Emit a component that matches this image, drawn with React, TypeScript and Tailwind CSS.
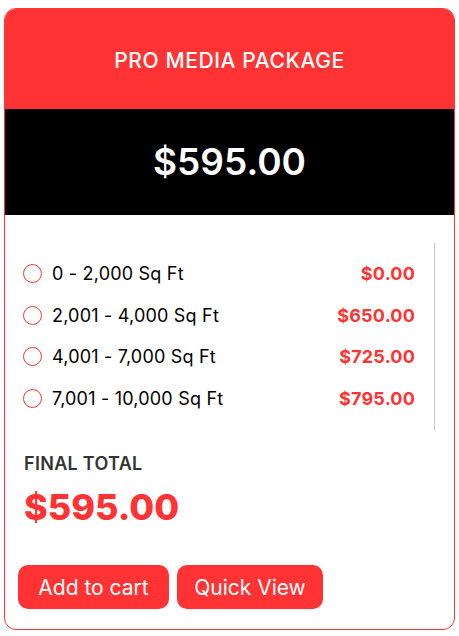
import React from "react";

const rows = [
  { label: "0 - 2,000 Sq Ft", price: "$0.00" },
  { label: "2,001 - 4,000 Sq Ft", price: "$650.00" },
  { label: "4,001 - 7,000 Sq Ft", price: "$725.00" },
  { label: "7,001 - 10,000 Sq Ft", price: "$795.00" },
];

export default function App() {
  return (
    <div className="bg-white w-[459px] h-[636px] pt-[8px] pl-[4px]" style={{ fontFamily: "Inter, 'Noto Sans', sans-serif" }}>
      <div className="w-[451px] h-[622px] border border-[#ff3333] rounded-[12px] overflow-hidden flex flex-col">
        <div className="h-[100px] bg-[#ff3333] flex items-center justify-center pt-[3px]">
          <span className="text-white text-[21px] font-medium tracking-[0.6px]">PRO MEDIA PACKAGE</span>
        </div>
        <div className="h-[106px] bg-black flex items-center justify-center">
          <span className="text-white text-[37px] font-semibold">$595.00</span>
        </div>
        <div className="pt-[28px] pl-[17px] pr-[19px]">
          <div className="border-r border-[#c8c8c8] pt-[10px] pb-[11px] pr-[19px]">
            {rows.map((r) => (
              <div key={r.label} className="h-[41.6px] flex items-center justify-between">
                <div className="flex items-center gap-[10px]">
                  <span className="w-[19px] h-[19px] rounded-full border border-[#ff3333] inline-block ml-[1px]" />
                  <span className="text-[18px] text-black tracking-[0.2px]">{r.label}</span>
                </div>
                <span className="text-[18px] font-bold text-[#ff3333] tracking-[0.2px]">{r.price}</span>
              </div>
            ))}
          </div>
        </div>
        <div className="pl-[19px] pt-[22px]">
          <div className="text-[18px] font-semibold text-[#333333] leading-[24px] tracking-[0.3px]">FINAL TOTAL</div>
          <div className="text-[36px] font-extrabold text-[#ff3333] leading-[44px] mt-[9px]">$595.00</div>
        </div>
        <div className="flex gap-[8px] pl-[13px] mt-[36px]">
          <button className="w-[151px] h-[44px] bg-[#ff3333] rounded-[10px] text-white text-[21px]">Add to cart</button>
          <button className="w-[146px] h-[44px] bg-[#ff3333] rounded-[10px] text-white text-[21px]">Quick View</button>
        </div>
      </div>
    </div>
  );
}
